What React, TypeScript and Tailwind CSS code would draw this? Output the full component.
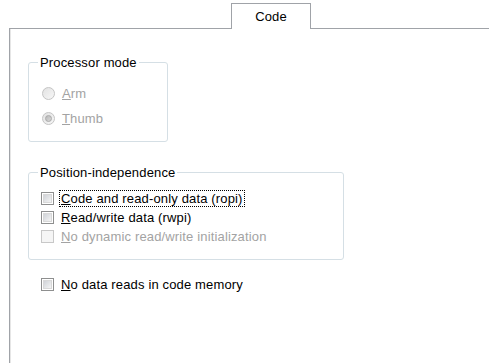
import React from "react";

function Radio({ checked }: { checked?: boolean }) {
  return (
    <span className="relative w-[13px] h-[13px] shrink-0 rounded-full border border-[#c4c4c4] bg-gradient-to-br from-[#e2e2e2] to-[#f7f7f7] flex items-center justify-center">
      {checked && (
        <span className="w-[7px] h-[7px] rounded-full border border-[#a8a8a8] bg-gradient-to-br from-[#b8b8b8] to-[#d8d8d8]" />
      )}
    </span>
  );
}

function Check({ disabled }: { disabled?: boolean }) {
  return (
    <span
      className={
        disabled
          ? "w-[13px] h-[13px] shrink-0 border border-[#c8c8c8] bg-[#f5f5f5]"
          : "w-[13px] h-[13px] shrink-0 border border-[#8e8f8f] bg-white p-px"
      }
    >
      {!disabled && (
        <span className="block w-full h-full border border-[#d8d8d8] bg-gradient-to-br from-[#d0d3d8] to-[#f4f4f4]" />
      )}
    </span>
  );
}

function Label({ k, rest, disabled, focus }: { k: string; rest: string; disabled?: boolean; focus?: boolean }) {
  return (
    <span
      className={`leading-[15px] whitespace-nowrap ${disabled ? "text-[#a3a3a3]" : "text-black"} ${
        focus ? "border border-dotted border-black px-px -ml-px" : "border border-transparent px-px -ml-px"
      }`}
    >
      <span className="underline underline-offset-[1px]">{k}</span>
      {rest}
    </span>
  );
}

export default function App() {
  return (
    <div className="w-[489px] h-[363px] bg-white overflow-hidden flex flex-col pl-[9px] text-[13px] tracking-[0.15px] text-black font-['Liberation_Sans',Arial,sans-serif]">
      {/* tab strip */}
      <div className="flex h-[29px] shrink-0">
        <div className="w-[222px] self-end border-b border-[#a0a3a8]" />
        <div className="mt-[3px] w-[80px] h-[26px] border border-b-0 border-[#a0a3a8] flex items-center justify-center leading-[15px]">
          Code
        </div>
        <div className="flex-1 self-end border-b border-[#a0a3a8]" />
      </div>

      {/* panel */}
      <div className="flex-1 border-l border-[#a0a3a8] shadow-[inset_1px_0_0_#e6e6e6] flex flex-col pl-[18px]">
        <fieldset className="mt-[26px] w-[140px] h-[87px] border border-[#d5dfe5] rounded-[3px]">
          <legend className="ml-[9px] px-[2px] leading-[15px]">Processor mode</legend>
          <div className="mt-[15px] pl-[13px] flex flex-col gap-[9px]">
            <div className="flex items-center gap-[6px] h-[16px]">
              <Radio />
              <Label k="A" rest="rm" disabled />
            </div>
            <div className="flex items-center gap-[6px] h-[16px]">
              <Radio checked />
              <Label k="T" rest="humb" disabled />
            </div>
          </div>
        </fieldset>

        <fieldset className="mt-[23px] w-[316px] h-[95px] border border-[#d5dfe5] rounded-[3px]">
          <legend className="ml-[9px] px-[2px] leading-[15px]">Position-independence</legend>
          <div className="mt-[10px] pl-[12px] flex flex-col gap-[3px]">
            <div className="flex items-center gap-[6px] h-[16px]">
              <Check />
              <Label k="C" rest="ode and read-only data (ropi)" focus />
            </div>
            <div className="flex items-center gap-[6px] h-[16px]">
              <Check />
              <Label k="R" rest="ead/write data (rwpi)" />
            </div>
            <div className="flex items-center gap-[6px] h-[16px]">
              <Check disabled />
              <Label k="N" rest="o dynamic read/write initialization" disabled />
            </div>
          </div>
        </fieldset>

        <div className="mt-[16px] ml-[13px] flex items-center gap-[6px] h-[16px]">
          <Check />
          <Label k="N" rest="o data reads in code memory" />
        </div>
      </div>
    </div>
  );
}
